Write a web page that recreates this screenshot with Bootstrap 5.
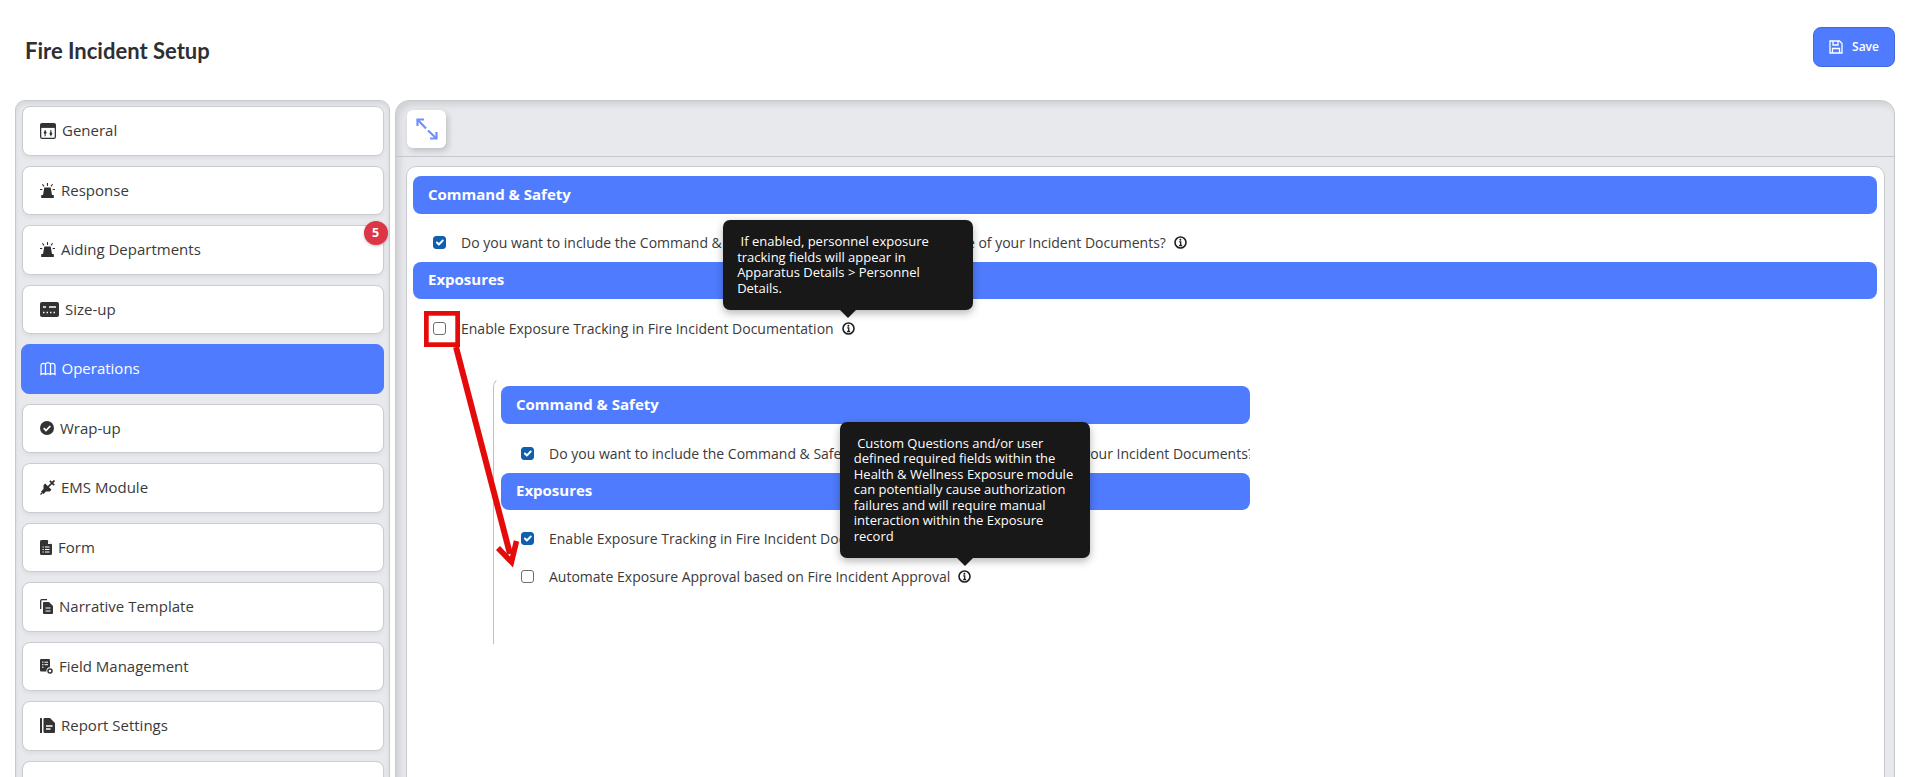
<!DOCTYPE html>
<html lang="en">
<head>
<meta charset="utf-8">
<title>Fire Incident Setup</title>
<link href="https://cdn.jsdelivr.net/npm/bootstrap@5.3.0/dist/css/bootstrap.min.css" rel="stylesheet">
<style>
html,body{height:777px;overflow:hidden;background:#fff}
body{font-family:"Open Sans","Liberation Sans",sans-serif;font-size:14px;color:#3a3a3a}
.page-head{height:100px;padding:2px 25px 0 25px}
.page-title{font-family:Lato,"Open Sans",sans-serif;font-weight:700;font-size:22px;color:#2f2f33;margin:0}
.save-btn{width:82px;height:40px;background:#4f7cff;border:1px solid #4169d8;border-radius:8px;color:#fff;font-size:12px;font-weight:600;position:relative;top:-4px;padding:0;gap:9px}
.save-btn:hover{background:#4f7cff;color:#fff;border-color:#4169d8}
.workspace{padding:0 25px 0 15px;gap:5px;height:677px}
.side-panel{width:375px;flex:none;height:700px;background:#e8e9ed;border:1px solid #c8c9cc;border-radius:10px 10px 0 0;padding:5px 5.5px 0 5.5px;box-shadow:inset 0 3px 4px rgba(0,0,0,.08);overflow:hidden}
.side-list{gap:10px;flex-wrap:nowrap}
.side-list .nav-link{height:49.5px;flex:none;background:#fff;border:1px solid #cbccd0;border-radius:8px;color:#3a3a3a;font-size:15px;padding:0 0 .5px 17.5px;box-shadow:0 2px 4px rgba(0,0,0,.06);gap:6px;position:relative}
.side-list .nav-link.active{background:#4f7cff;border-color:#4f7cff;color:#fff;box-shadow:none;margin:0 -0.5px}
.side-list svg{flex:none}
.count-pill{position:absolute;top:-5px;right:-5px;width:24px;height:24px;background:#dc3545;color:#fff;font-size:12.5px;font-weight:700;border-radius:50%;box-shadow:0 1px 3px rgba(0,0,0,.25)}
.main-panel{width:1500px;flex:none;height:700px;background:#e8e9ed;border:1px solid #c8c9cc;border-radius:14px 14px 0 0;box-shadow:inset 4px 4px 6px rgba(0,0,0,.1);overflow:hidden}
.tool-strip{height:56px;border-bottom:1px solid #c6c7ca;padding:9px 0 0 11px}
.expand-btn{width:39px;height:38px;background:#fff;border:0;border-radius:6px;padding:0;box-shadow:2px 3px 6px rgba(0,0,0,.18)}
.sheet{margin:9px 9px 0 10px;height:640px;background:#fff;border:1px solid #c9cacd;border-radius:10px 10px 0 0;padding:9px 7px 0 6px;position:relative}
.sect-bar{height:38px;background:#4f7cff;color:#fff;font-weight:700;font-size:15px;border-radius:8px;padding:0 0 2px 15px}
.sect-bar.short{height:37px}
.opt-row{padding:19px 0 10px 20px;line-height:19px;white-space:nowrap}
.opt-row.first-after{padding-top:20px;padding-bottom:0}
.opt-row.nest-first{padding-top:20px}
.opt-row .form-check-input{width:13px;height:13px;margin:0 15px 0 0;flex:none;border:1px solid #6d6d6d;border-radius:3px;background-size:13px 13px;opacity:1}
.opt-row .form-check-input:checked{background-color:#0f5fae;border-color:#0f5fae}
.info-spot{position:relative;display:inline-flex;margin-left:8px;flex:none}
.tip-box{position:absolute;left:50%;bottom:calc(100% + 12px);transform:translateX(-50%);width:250px;background:#181818;color:#fff;font-size:13px;line-height:15.5px;border-radius:7px;padding:14px;white-space:normal;box-shadow:0 3px 8px rgba(0,0,0,.3);z-index:5}
.tip-box::after{content:"";position:absolute;left:50%;top:100%;margin-left:-8px;border:8px solid transparent;border-bottom:0;border-top-color:#181818}
.nested-shot{margin:39px 0 0 80px;width:757px;height:267px;border-left:1px solid #bfbfc2;border-top:1px solid transparent;border-top-left-radius:10px;padding:8px 0 0 7px;overflow:hidden}
.mark-layer{position:absolute;left:17px;top:144px;z-index:3;pointer-events:none}
.tail-row{padding-top:19px;padding-bottom:0}
</style>
</head>
<body>
<header class="page-head d-flex align-items-center justify-content-between">
  <h1 class="page-title">Fire Incident Setup</h1>
  <button type="button" class="btn save-btn d-flex align-items-center justify-content-center">
    <svg width="14" height="14" viewBox="0 0 14 14" fill="none" stroke="#fff" stroke-width="1.3"><path d="M1 1h9.5L13 3.5V13H1z"/><path d="M4 1v4h5V1M3.5 13V8.5h7V13"/></svg>
    <span>Save</span>
  </button>
</header>
<div class="workspace d-flex">
  <aside class="side-panel">
    <nav class="nav nav-pills flex-column side-list">
      <a class="nav-link d-flex align-items-center" href="#"><svg width="16" height="16" viewBox="0 0 15 15"><rect x=".6" y=".6" width="13.8" height="13.8" rx="1.5" fill="#fff" stroke="#333" stroke-width="1.2"/><rect x=".6" y=".6" width="13.8" height="4" fill="#333"/><path d="M4.8 6.5v6M10.2 6.5v6" stroke="#333"/><circle cx="4.8" cy="9" r="1.3" fill="#333"/><circle cx="10.2" cy="10" r="1.3" fill="#333"/></svg><span>General</span></a>
      <a class="nav-link d-flex align-items-center" href="#"><svg width="15" height="15" viewBox="0 0 15 15" fill="#2f2f2f"><path d="M4.300 4.500h6.400l1.300 7.500H3z"/><rect x="1.200" y="12" width="12.600" height="3"/><path d="M7.500 0v3M2.400 1.200l1.600 2.200M12.600 1.200l-1.600 2.200M0 6.500h2.300M12.700 6.500h2.300" stroke="#2f2f2f" stroke-width="1.100"/></svg><span>Response</span></a>
      <a class="nav-link d-flex align-items-center" href="#"><svg width="15" height="15" viewBox="0 0 15 15" fill="#2f2f2f"><path d="M4.300 4.500h6.400l1.300 7.500H3z"/><rect x="1.200" y="12" width="12.600" height="3"/><path d="M7.500 0v3M2.400 1.200l1.600 2.200M12.600 1.200l-1.600 2.200M0 6.500h2.300M12.700 6.500h2.300" stroke="#2f2f2f" stroke-width="1.100"/></svg><span>Aiding Departments</span><span class="count-pill d-flex align-items-center justify-content-center">5</span></a>
      <a class="nav-link d-flex align-items-center" href="#"><svg width="19" height="15" viewBox="0 0 19 15"><rect width="19" height="15" rx="2" fill="#333"/><path d="M3 5h3M9 5h7" stroke="#fff" stroke-width="1.6"/><path d="M3 10.500h1.500M6.500 10.500h1.500M10 10.500h1.500M13.500 10.500h1.500" stroke="#fff" stroke-width="1.6"/></svg><span>Size-up</span></a>
      <a class="nav-link active d-flex align-items-center" href="#"><svg width="16" height="15" viewBox="0 0 16 15" fill="none" stroke="#fff" stroke-width="1.2"><path d="M1 13.500V4.500C1 3 3 1.500 5.500 2.800C8 1.200 8 1.200 10.500 2.800C13 1.500 15 3 15 4.500V13.500C13 12.300 12 12.300 10.500 13.500C8 12.300 8 12.300 5.500 13.500C4 12.300 3 12.300 1 13.500Z"/><path d="M5.500 2.800V13.500M10.500 2.800V13.500"/></svg><span>Operations</span></a>
      <a class="nav-link d-flex align-items-center" href="#"><svg width="14" height="14" viewBox="0 0 14 14"><circle cx="7" cy="7" r="7" fill="#333"/><path d="M3.700 7.200l2.300 2.300 4.300-4.500" fill="none" stroke="#fff" stroke-width="1.800"/></svg><span>Wrap-up</span></a>
      <a class="nav-link d-flex align-items-center" href="#"><svg width="15" height="15" viewBox="0 0 15 15" fill="#2f2f2f"><path d="M5.200 3.500l6.300 6.300-1.800 1.700H6L3.500 14 1 11.500 3.500 9V5.200z"/><path d="M.5 14.500L3 12" stroke="#2f2f2f" stroke-width="1.300"/><path d="M8 7l4.200-4.200M9.800 .8l4.400 4.400M12.200 2.800L14.500 .5" stroke="#2f2f2f" stroke-width="1.700"/></svg><span>EMS Module</span></a>
      <a class="nav-link d-flex align-items-center" href="#"><svg width="12" height="15" viewBox="0 0 12 15"><path d="M0 1.500A1.500 1.500 0 0 1 1.500 0H7.500L12 4.500V13.500A1.500 1.500 0 0 1 10.500 15H1.500A1.500 1.500 0 0 1 0 13.500Z" fill="#333"/><path d="M8 .5V4H11.500" fill="#fff"/><path d="M2.500 7h1.300M5 7h4.500M2.500 9.500h1.300M5 9.500h4.500M2.500 12h1.300M5 12h4.500" stroke="#fff" stroke-width="1.100"/></svg><span>Form</span></a>
      <a class="nav-link d-flex align-items-center" href="#"><svg width="13" height="15" viewBox="0 0 13 15"><path d="M.7 10V1.800A1.100 1.100 0 0 1 1.800 .7H7" fill="none" stroke="#333" stroke-width="1.300"/><path d="M3 4A1 1 0 0 1 4 3H9L13 7V14A1 1 0 0 1 12 15H4A1 1 0 0 1 3 14Z" fill="#333"/><path d="M5.500 9h5M5.500 12h5" stroke="#fff" stroke-width="1.200"/></svg><span>Narrative Template</span></a>
      <a class="nav-link d-flex align-items-center" href="#"><svg width="13" height="15" viewBox="0 0 13 15"><path d="M0 1.200A1.200 1.200 0 0 1 1.200 0H8.800A1.200 1.200 0 0 1 10 1.200V8.200A3.500 3.500 0 0 0 6.500 12.500H1.200A1.200 1.200 0 0 1 0 11.300Z" fill="#333"/><path d="M2 3.200h1.500M4.500 3.200h3.500M2 5.700h1.500M4.500 5.700h3.500M2 8.200h1.500" stroke="#fff"/><circle cx="10" cy="12" r="2" fill="none" stroke="#333" stroke-width="1.500"/></svg><span>Field Management</span></a>
      <a class="nav-link d-flex align-items-center" href="#"><svg width="15" height="15" viewBox="0 0 15 15"><rect x="0" y="0" width="2" height="15" rx=".5" fill="#333"/><path d="M3.500 1.200A1.200 1.200 0 0 1 4.700 0H10L15 5V13.800A1.200 1.200 0 0 1 13.800 15H4.700A1.200 1.200 0 0 1 3.500 13.800Z" fill="#333"/><path d="M6 8h6.500M6 11h4.500" stroke="#fff" stroke-width="1.300"/></svg><span>Report Settings</span></a>
      <a class="nav-link d-flex align-items-center" href="#"></a>
    </nav>
  </aside>
  <main class="main-panel">
    <div class="tool-strip">
      <button type="button" class="expand-btn d-flex align-items-center justify-content-center" aria-label="Expand">
        <svg width="22" height="22" viewBox="0 0 22 22" fill="none" stroke="#6e90ff" stroke-width="2.2"><path d="M1.500 1.500L10 10.500M12 12.500L20.500 20.500"/><path d="M1.500 8V1.500H8M20.500 14V20.500H14"/></svg>
      </button>
    </div>
    <section class="sheet">
      <div class="sect-bar d-flex align-items-center">Command &amp; Safety</div>
      <div class="opt-row d-flex align-items-center">
        <input class="form-check-input" type="checkbox" checked aria-label="Include">
        <span>Do you want to include the Command &amp; Safety section&thinsp; on the front cover page of your Incident Documents?</span>
        <span class="info-spot"><svg width="13" height="13" viewBox="0 0 13 13" fill="none" stroke="#1f1f1f"><circle cx="6.500" cy="6.500" r="5.500" stroke-width="1.600"/><path d="M5.200 5.800h1.500v3.400M5.100 9.500h3" stroke-width="1.300"/><circle cx="6.400" cy="3.700" r="1" fill="#1f1f1f" stroke="none"/></svg></span>
      </div>
      <div class="sect-bar short d-flex align-items-center">Exposures</div>
      <div class="opt-row first-after d-flex align-items-center">
        <input class="form-check-input" type="checkbox" aria-label="Enable">
        <span>Enable Exposure Tracking in Fire Incident Documentation</span>
        <span class="info-spot">
          <svg width="13" height="13" viewBox="0 0 13 13" fill="none" stroke="#1f1f1f"><circle cx="6.500" cy="6.500" r="5.500" stroke-width="1.600"/><path d="M5.200 5.800h1.500v3.400M5.100 9.500h3" stroke-width="1.300"/><circle cx="6.400" cy="3.700" r="1" fill="#1f1f1f" stroke="none"/></svg>
          <span class="tip-box">&nbsp;If enabled, personnel exposure tracking fields will appear in Apparatus Details &gt; Personnel Details.</span>
        </span>
      </div>
      <div class="nested-shot">
        <div class="sect-bar d-flex align-items-center">Command &amp; Safety</div>
        <div class="opt-row nest-first d-flex align-items-center">
          <input class="form-check-input" type="checkbox" checked aria-label="Include">
          <span>Do you want to include the Command &amp; Safety section&thinsp; on the front cover page of your Incident Documents?</span>
        </div>
        <div class="sect-bar short d-flex align-items-center">Exposures</div>
        <div class="opt-row tail-row d-flex align-items-center">
          <input class="form-check-input" type="checkbox" checked aria-label="Enable">
          <span>Enable Exposure Tracking in Fire Incident Documentation</span>
        </div>
        <div class="opt-row tail-row d-flex align-items-center">
          <input class="form-check-input" type="checkbox" aria-label="Automate">
          <span>Automate Exposure Approval based on Fire Incident Approval</span>
          <span class="info-spot">
            <svg width="13" height="13" viewBox="0 0 13 13" fill="none" stroke="#1f1f1f"><circle cx="6.500" cy="6.500" r="5.500" stroke-width="1.600"/><path d="M5.200 5.800h1.500v3.400M5.100 9.500h3" stroke-width="1.300"/><circle cx="6.400" cy="3.700" r="1" fill="#1f1f1f" stroke="none"/></svg>
            <span class="tip-box">&nbsp;Custom Questions and/or user defined required fields within the Health &amp; Wellness Exposure module can potentially cause authorization failures and will require manual interaction within the Exposure record</span>
          </span>
        </div>
      </div>
      <svg class="mark-layer" width="110" height="262" viewBox="0 0 110 262" fill="none" stroke="#e60b0b"><rect x="2.350" y="2.350" width="31.300" height="31.300" stroke-width="4.700"/><path d="M32 36L86 243" stroke-width="6"/><path d="M74 237L87.500 251L92.500 230" stroke-width="5.500"/></svg>
    </section>
  </main>
</div>
<script src="https://cdn.jsdelivr.net/npm/bootstrap@5.3.0/dist/js/bootstrap.bundle.min.js"></script>
</body>
</html>
